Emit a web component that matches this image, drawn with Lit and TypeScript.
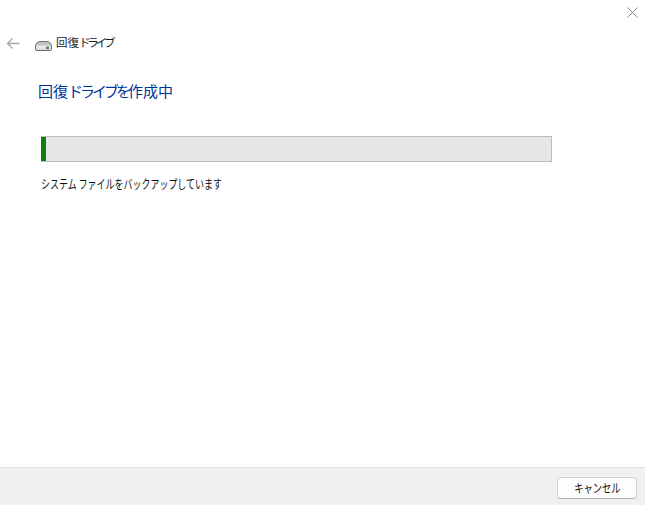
import { LitElement, html, css } from 'lit';
import { customElement } from 'lit/decorators.js';

@customElement('app-root')
export class AppRoot extends LitElement {
  static styles = css`
    :host {
      display: flex;
      flex-direction: column;
      width: 645px;
      height: 505px;
      background: #ffffff;
      color: #000000;
      font-family: 'Noto Sans CJK JP', 'Liberation Sans', sans-serif;
      overflow: hidden;
    }

    .top {
      display: flex;
      justify-content: flex-end;
      height: 31px;
      padding: 6px 6px 0 0;
      box-sizing: border-box;
    }

    .close {
      display: block;
      width: 13px;
      height: 13px;
    }

    .nav {
      display: flex;
      align-items: center;
      height: 24px;
      padding-left: 6px;
    }

    .back {
      display: block;
      width: 14px;
      height: 13px;
      margin-right: 15px;
    }

    .drive {
      display: block;
      width: 17px;
      height: 10px;
      margin: 5px 4px 0 0;
    }

    .nav-title {
      font-size: 11.5px;
      line-height: 16px;
      color: #1a1a1a;
      padding-bottom: 2px;
    }

    .nav-title .kana {
      letter-spacing: -3.2px;
    }

    .main {
      flex: 1;
      padding: 26px 0 0 38px;
    }

    .heading {
      font-size: 15px;
      line-height: 20px;
      color: #003399;
    }

    .heading .kana {
      letter-spacing: -3px;
    }

    .progress {
      width: 511px;
      height: 26px;
      margin: 35px 0 0 3px;
      box-sizing: border-box;
      background: #e6e6e6;
      border: 1px solid #bcbcbc;
    }

    .progress-fill {
      height: 100%;
      margin-left: -1px;
      background: #107c10;
    }

    .status {
      margin: 13px 0 0 3px;
      font-size: 12.5px;
      line-height: 18px;
      color: #111111;
      white-space: nowrap;
    }

    .narrow {
      display: inline-block;
      transform: scaleX(0.718);
      transform-origin: left center;
    }

    .footer {
      display: flex;
      justify-content: flex-end;
      align-items: flex-start;
      height: 38px;
      padding: 9px 8px 0 0;
      box-sizing: border-box;
      background: #f0f0f0;
      border-top: 1px solid #dfdfdf;
    }

    .cancel {
      width: 80px;
      height: 22px;
      padding: 0;
      box-sizing: border-box;
      background: #fdfdfd;
      border: 1px solid #d0d0d0;
      border-bottom-color: #b0b0b0;
      border-radius: 4px;
      font-family: inherit;
      font-size: 12.5px;
      line-height: 18px;
      color: #111111;
    }

    .cancel .narrow {
      transform-origin: center center;
      transform: scaleX(0.74);
    }
  `;

  render() {
    const progress = 5;
    return html`
      <div class="top">
        <svg class="close" viewBox="0 0 13 13" fill="none" stroke="#8c8c8c" stroke-width="1">
          <path d="M1.5 1.5l10 10M11.5 1.5l-10 10"></path>
        </svg>
      </div>
      <div class="nav">
        <svg class="back" viewBox="0 0 14 13" fill="none" stroke="#a6a6a6" stroke-width="1.3">
          <path d="M1.5 6.5h12M6.5 1.5l-5 5l5 5"></path>
        </svg>
        <svg class="drive" viewBox="0 0 17 10">
          <path d="M.5 5.5C.5 2.5 3 .5 5 .5h7c2 0 4.500 2 4.500 5v3a1 1 0 0 1-1 1h-14a1 1 0 0 1-1-1z" fill="#c4c4c4" stroke="#6d6d6d"></path>
          <path d="M1.500 4.500h14v4h-14z" fill="#e8e8e8"></path>
          <path d="M11 5.500h3v2.500h-3z" fill="#4e9a3a"></path>
        </svg>
        <span class="nav-title">回復<span class="kana">ドライブ</span></span>
      </div>
      <div class="main">
        <div class="heading">回復<span class="kana">ドライブを</span>作成中</div>
        <div class="progress">
          <div class="progress-fill" style="width:${progress}px"></div>
        </div>
        <div class="status"><span class="narrow">システム ファイルをバックアップしています</span></div>
      </div>
      <div class="footer">
        <button class="cancel"><span class="narrow">キャンセル</span></button>
      </div>
    `;
  }
}
